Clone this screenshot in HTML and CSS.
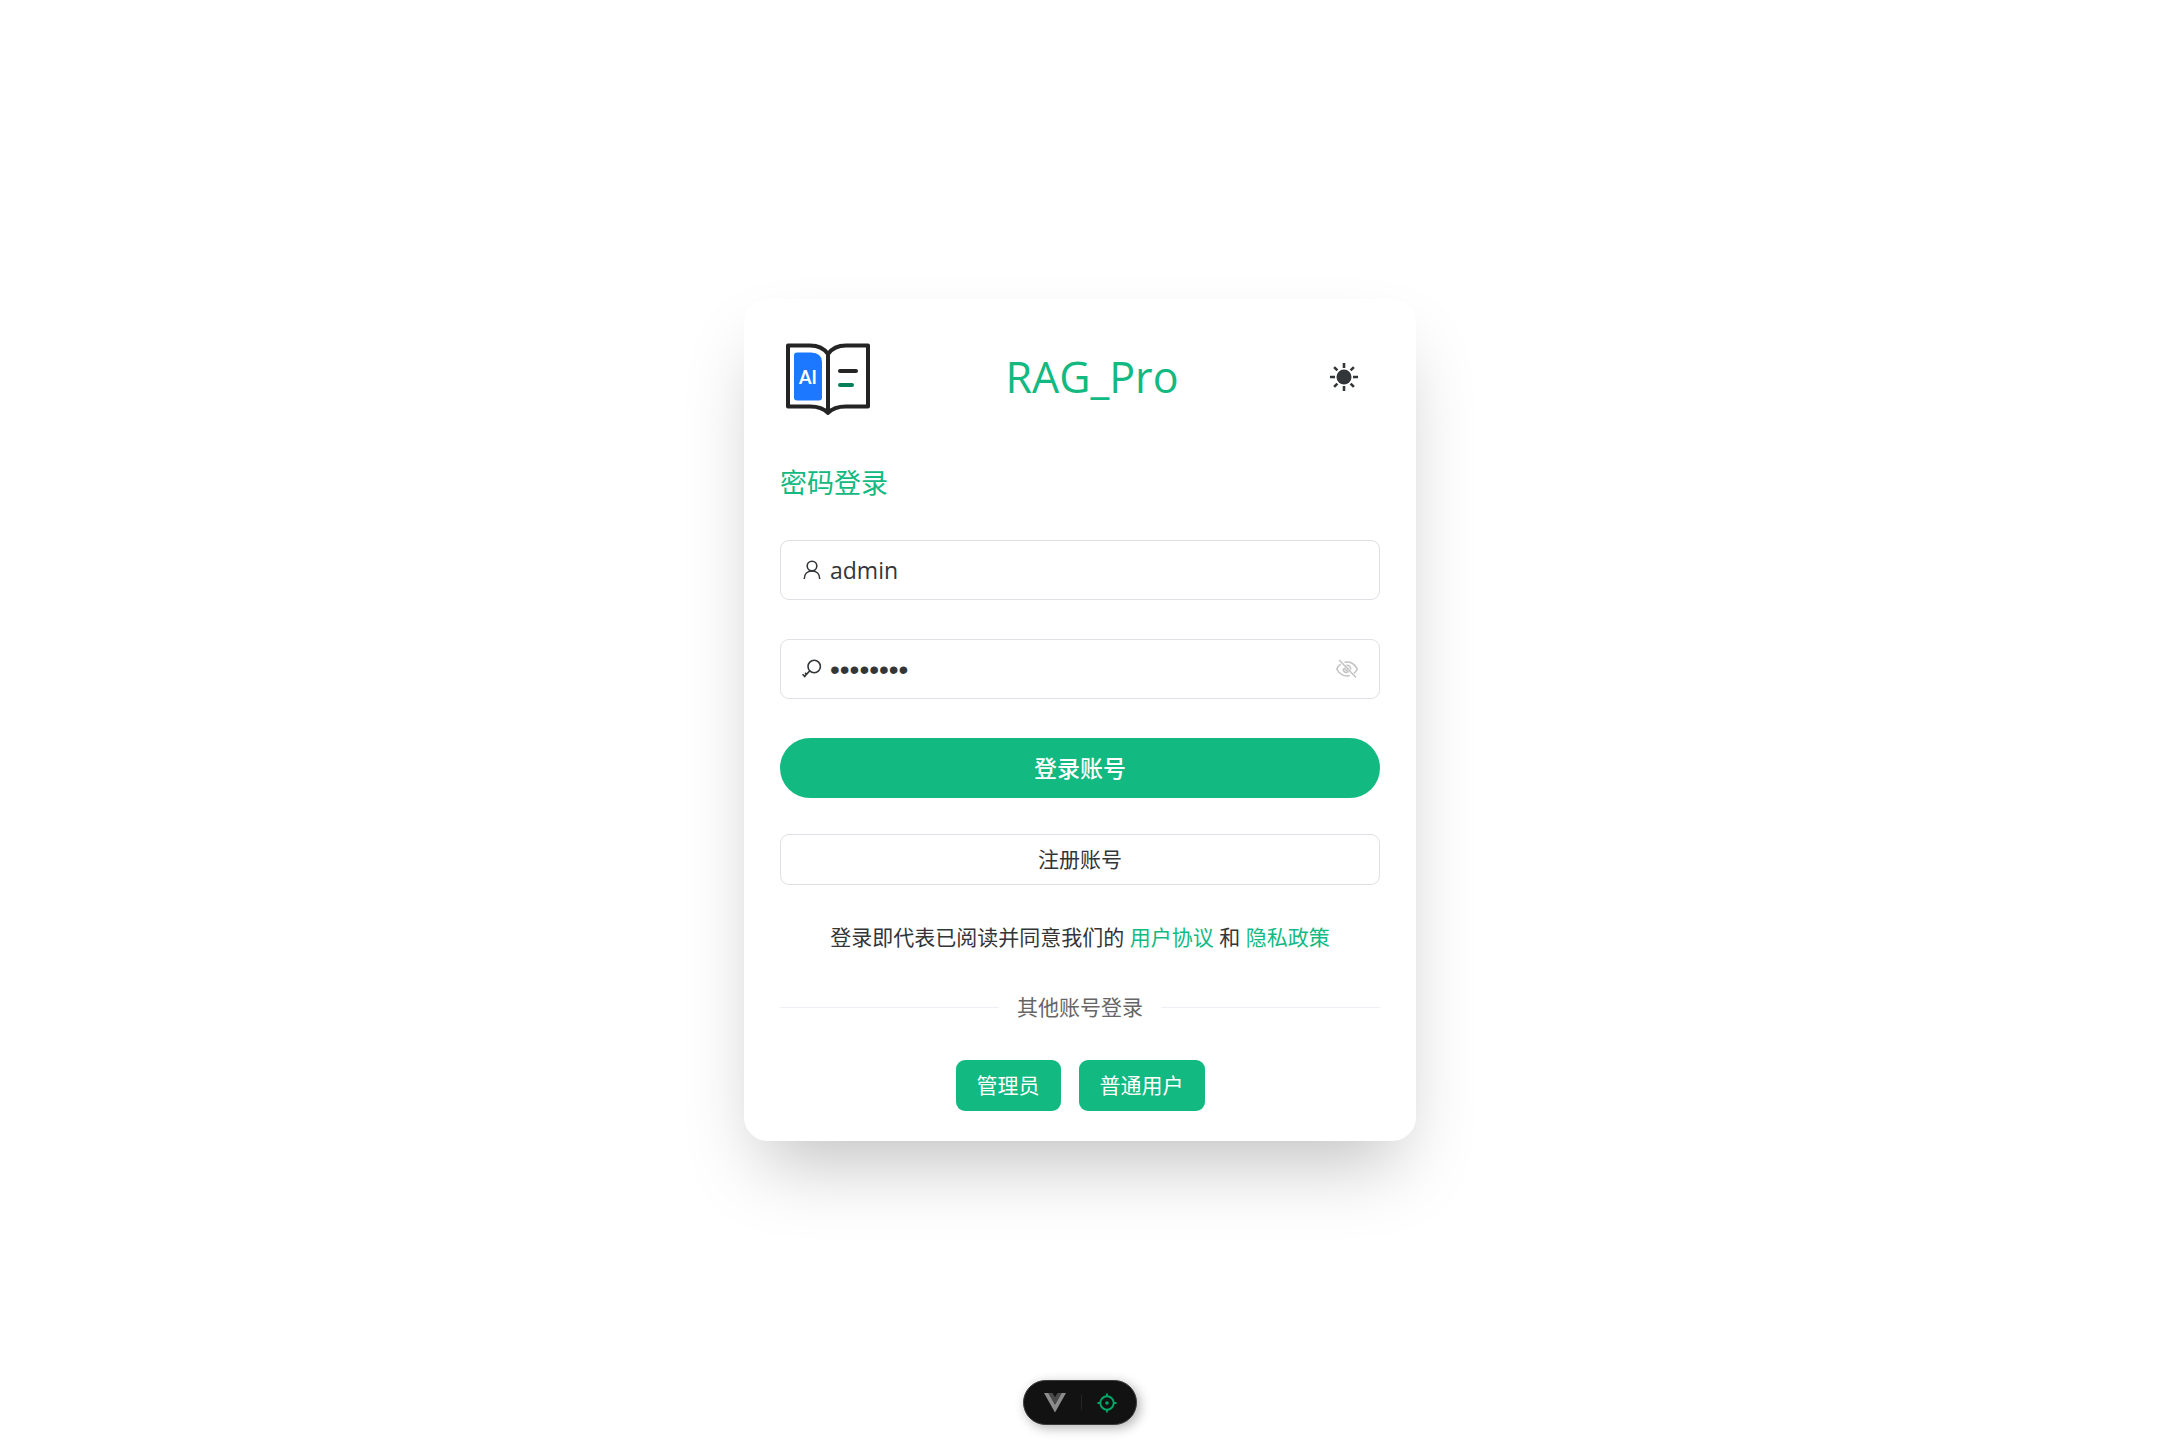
FILE: index.html
```html
<!DOCTYPE html>
<html lang="zh-CN">
<head>
<meta charset="utf-8">
<meta name="viewport" content="width=device-width, initial-scale=1">
<title>RAG_Pro</title>
<link rel="stylesheet" href="styles.css">
</head>
<body>
<main class="login-card">
  <header class="card-header">
    <svg class="logo" viewBox="0 0 96 96" role="img" aria-label="AI">
      <path d="M8 16.500H30Q42 16.500 48 25Q54 16.500 66 16.500H88V77.500H66Q54 77.500 48 84Q42 77.500 30 77.500H8ZM48 25V83" fill="none" stroke="#242424" stroke-width="4" stroke-linejoin="round"/>
      <path d="M17 23.500H31Q42 24 42 33V68.500q0 3-3 3H17q-3 0-3-3V26.500q0-3 3-3Z" fill="#1b78ff"/>
      <text class="logo-text" x="28" y="55" text-anchor="middle">AI</text>
      <path d="M60 42H76" stroke="#242424" stroke-width="4" stroke-linecap="round"/>
      <path d="M60 56H72" stroke="#087f5b" stroke-width="4" stroke-linecap="round"/>
    </svg>
    <h1 class="title">RAG_Pro</h1>
    <button class="theme-toggle" type="button" aria-label="切换主题">
      <svg class="sun" viewBox="0 0 28 28">
        <circle cx="14" cy="14" r="7.500" fill="currentColor"/>
        <path d="M14 0V5M14 23V28M0 14H5M23 14H28M4.100 4.100L7.400 7.400M20.600 20.600L23.900 23.900M4.100 23.900L7.400 20.600M20.600 7.400L23.900 4.100" stroke="currentColor" stroke-width="2.600"/>
      </svg>
    </button>
  </header>
  <h2 class="subtitle">密码登录</h2>
  <form class="login-form">
    <div class="field">
      <label class="field-icon" for="username" aria-label="用户名">
        <svg viewBox="0 0 20 20"><g fill="none" stroke="currentColor" stroke-width="1.600"><circle cx="10" cy="6" r="4.800"/><path d="M2.300 19C2.300 14 5.500 11 10 11S17.700 14 17.700 19"/></g></svg>
      </label>
      <input class="field-input" id="username" type="text" value="admin" autocomplete="username">
    </div>
    <div class="field">
      <label class="field-icon" for="password" aria-label="密码">
        <svg viewBox="0 0 20 20"><g fill="none" stroke="currentColor" stroke-width="1.600"><circle cx="12.200" cy="7.500" r="6.200"/><path d="M7.800 11.900L2.200 17.500M.5 15.200L3.400 18.100M3 13.800L5.200 16"/></g></svg>
      </label>
      <input class="field-input password-input" id="password" type="password" value="admin123" autocomplete="current-password">
      <button class="reveal" type="button" aria-label="显示密码">
        <svg viewBox="0 0 24 24"><g fill="none" stroke="currentColor" stroke-width="1.500"><path d="M9.500 5.300C15 3.900 20 7 22.200 12C21.500 13.800 20.300 15.400 18.800 16.500M14.800 18.600C9 20 4 17 1.800 12C2.600 10 4 8.300 5.700 7.100"/><path d="M11.500 8.200C14 8 15.900 10 15.700 12.500M12.300 15.800C9.800 15.900 8 14 8.300 11.500"/><path d="M10 8.700L15 14M9 11L13.500 15.500M4.200 3L21 20.500"/></g></svg>
      </button>
    </div>
    <div class="actions">
      <button class="btn-login" type="button">登录账号</button>
      <button class="btn-register" type="button">注册账号</button>
    </div>
  </form>
  <p class="agreement">登录即代表已阅读并同意我们的 <a href="#terms">用户协议</a> 和 <a href="#privacy">隐私政策</a></p>
  <div class="divider">其他账号登录</div>
  <div class="accounts">
    <button class="btn-account" type="button">管理员</button>
    <button class="btn-account" type="button">普通用户</button>
  </div>
</main>
<aside class="devtools">
  <button class="dev-button" type="button" aria-label="Vue DevTools">
    <svg class="vue" viewBox="0 0 22 20"><path d="M0 0H4.500L11 11.500L17.500 0H22L11 19.500Z" fill="#8c8c8c"/><path d="M4.500 0H8.500L11 4.200L13.500 0H17.500L11 11.500Z" fill="#4a4a4a"/></svg>
  </button>
  <span class="dev-separator"></span>
  <button class="dev-button" type="button" aria-label="Component inspector">
    <svg class="target" viewBox="0 0 20 20"><g fill="none" stroke="#00a968" stroke-width="1.900"><circle cx="10" cy="10" r="6.700"/><path d="M10 .5V4M10 16V19.500M.5 10H4M16 10H19.500"/></g><circle cx="10" cy="10" r="1.800" fill="#00a968"/></svg>
  </button>
</aside>
</body>
</html>
```

FILE: styles.css
```css
* {
  box-sizing: border-box;
}

body {
  margin: 0;
  min-height: 100vh;
  display: flex;
  align-items: center;
  justify-content: center;
  background: #fff;
  color: #333639;
  font-family: "Open Sans", "Noto Sans CJK SC", sans-serif;
  font-size: 21px;
  line-height: 33px;
}

button,
input {
  font: inherit;
  color: inherit;
}

button {
  padding: 0;
  border: 0;
  background: none;
  cursor: pointer;
}

svg {
  display: block;
}

.login-card {
  width: 100%;
  max-width: 672px;
  padding: 30px 36px;
  display: flex;
  flex-direction: column;
  gap: 36px;
  border-radius: 24px;
  background: #fff;
  box-shadow: 0 38px 75px -18px rgba(0, 0, 0, 0.25);
}

.card-header {
  display: flex;
  align-items: center;
  justify-content: space-between;
}

.logo {
  width: 96px;
  height: 96px;
}

.logo-text {
  fill: #fff;
  font-family: Lato, sans-serif;
  font-size: 18px;
  font-weight: 700;
}

.title {
  margin: 0;
  color: #12b981;
  font-size: 43px;
  font-weight: 400;
  line-height: 60px;
}

.theme-toggle {
  width: 72px;
  height: 60px;
  display: grid;
  place-items: center;
}

.sun {
  width: 28px;
  height: 28px;
}

.subtitle {
  margin: 0;
  color: #12b981;
  font-size: 27px;
  font-weight: 400;
  line-height: 43px;
}

.login-form {
  display: flex;
  flex-direction: column;
  gap: 39px;
}

.field {
  height: 60px;
  padding: 0 20px 0 21px;
  display: flex;
  align-items: center;
  border: 1px solid #e0e0e6;
  border-radius: 9px;
}

.field-icon {
  width: 20px;
  margin-right: 8px;
}

.field-input {
  flex: 1;
  min-width: 0;
  padding: 0;
  border: 0;
  outline: 0;
  background: none;
  font-size: 23px;
}

.password-input {
  font-family: "Liberation Sans", sans-serif;
  font-size: 28px;
}

.reveal {
  width: 24px;
  color: #c2c2c2;
}

.actions {
  display: flex;
  flex-direction: column;
  gap: 36px;
}

.btn-login {
  height: 60px;
  border-radius: 30px;
  background: #12b981;
  color: #fff;
  font-size: 23px;
  font-weight: 500;
}

.btn-register {
  height: 51px;
  border: 1px solid #e0e0e6;
  border-radius: 9px;
}

.agreement {
  margin: 0;
  text-align: center;
}

.agreement a {
  color: #12b981;
  text-decoration: none;
}

.divider {
  display: flex;
  align-items: center;
  gap: 18px;
  color: #666;
  line-height: 34px;
}

.divider::before,
.divider::after {
  content: "";
  flex: 1;
  height: 1px;
  background: #efeff5;
}

.accounts {
  display: flex;
  justify-content: center;
  gap: 18px;
}

.btn-account {
  height: 51px;
  padding: 0 21px;
  border-radius: 9px;
  background: #12b981;
  color: #fff;
}

.devtools {
  position: fixed;
  bottom: 15px;
  left: 50%;
  transform: translateX(-50%);
  width: 114px;
  height: 45px;
  padding: 0 17px 0 19px;
  display: flex;
  align-items: center;
  justify-content: space-between;
  border: 1px solid #3a3a3a;
  border-radius: 23px;
  background: #121212;
  box-shadow: 3px 3px 12px rgba(0, 0, 0, 0.3);
}

.dev-button {
  width: 24px;
  display: grid;
  place-items: center;
}

.vue {
  width: 22px;
  height: 20px;
}

.target {
  width: 20px;
  height: 20px;
}

.dev-separator {
  width: 1px;
  height: 15px;
  background: #262626;
}
```
